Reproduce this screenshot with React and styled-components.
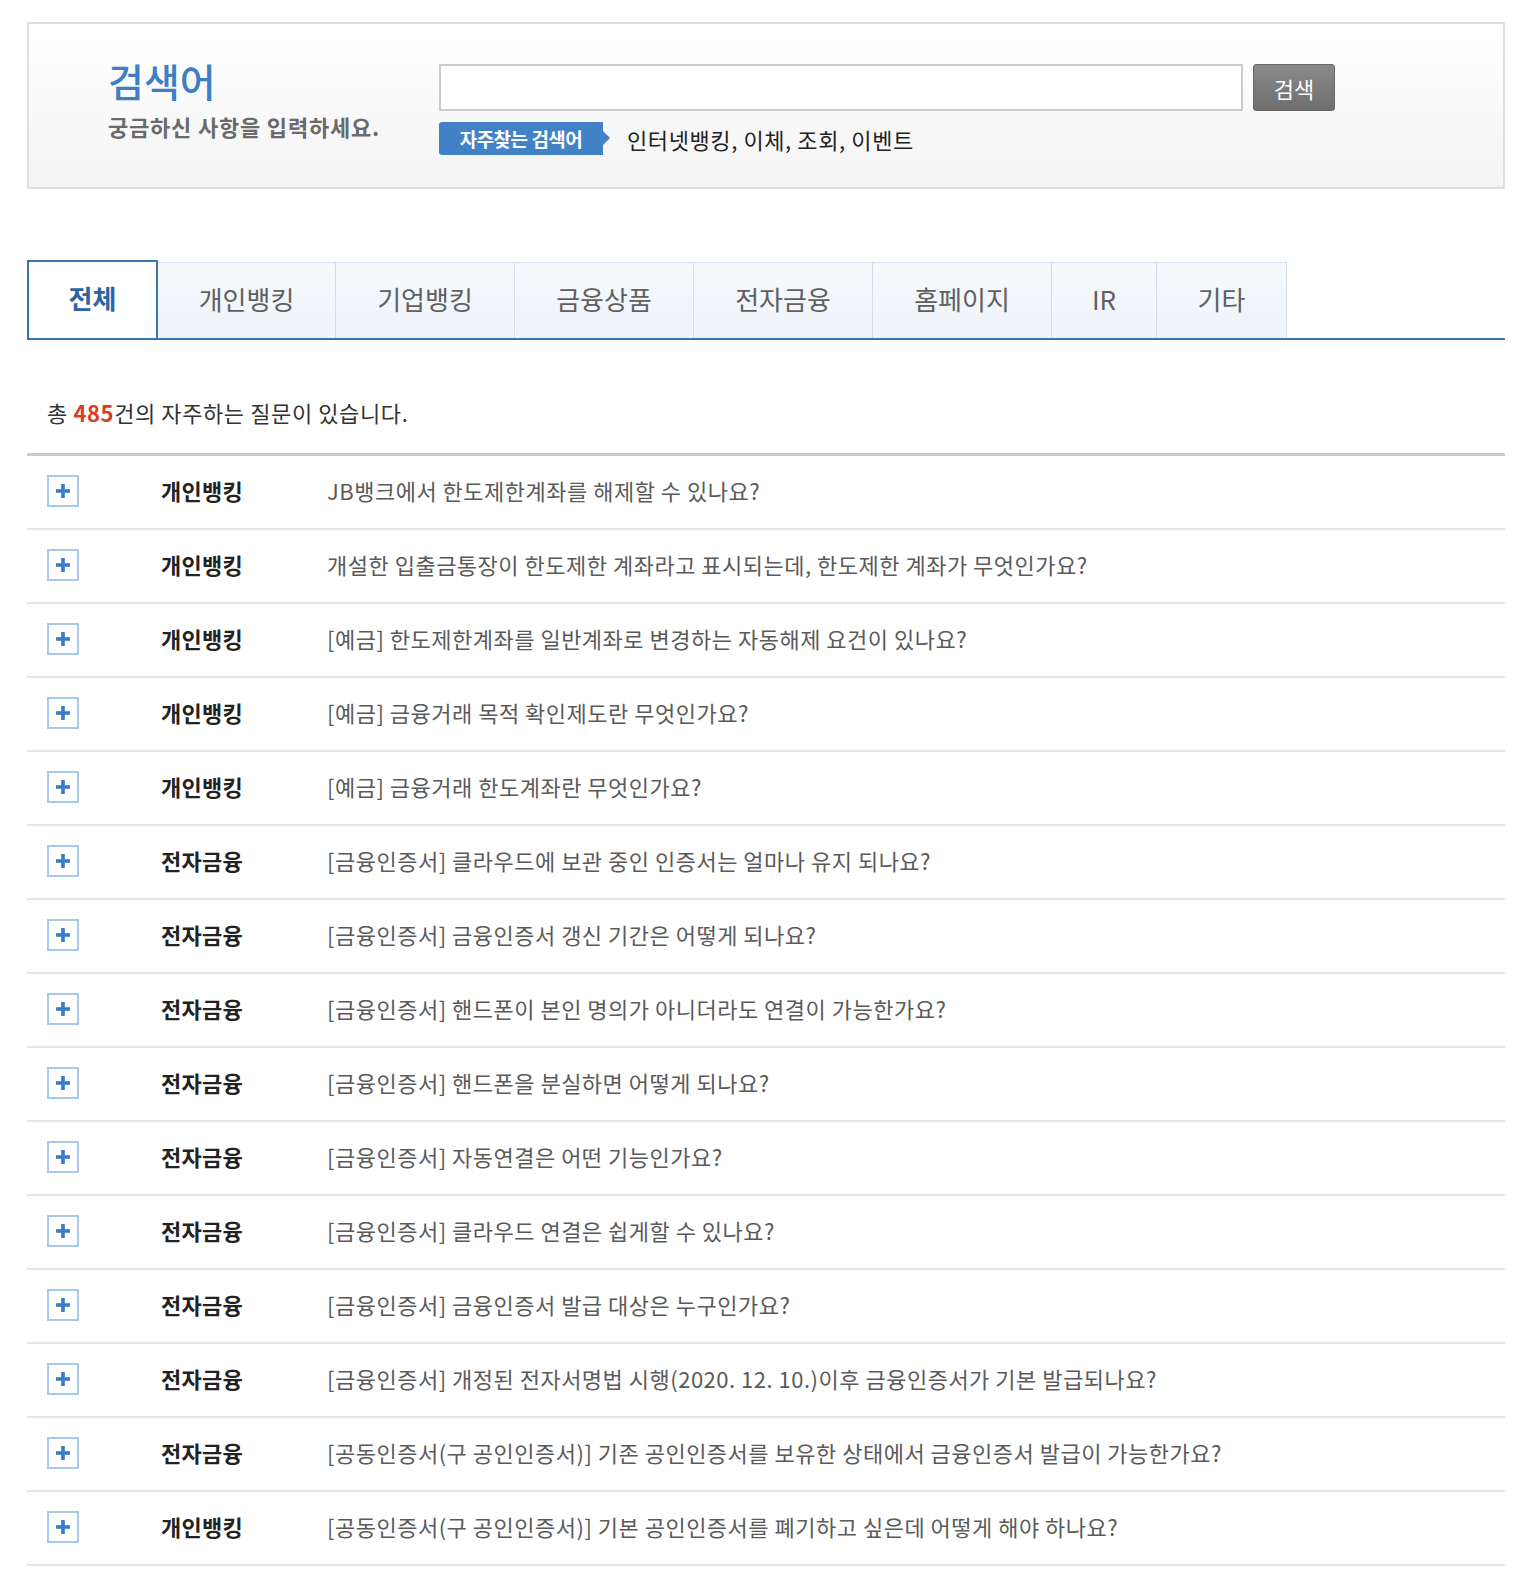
import React from 'react';
import styled, { createGlobalStyle } from 'styled-components';

const GlobalStyle = createGlobalStyle`
  body {
    margin: 0;
    background: #fff;
    font-family: "Noto Sans CJK KR", "Noto Sans", sans-serif;
  }
`;

const Page = styled.div`
  width: 1478px;
  padding: 22px 0 0 27px;
`;

const SearchBox = styled.div`
  display: flex;
  height: 163px;
  border: 2px solid #dedede;
  background: linear-gradient(to bottom, #ffffff 0%, #f4f4f4 100%);
  box-sizing: content-box;
`;

const SearchIntro = styled.div`
  width: 331px;
  padding: 31px 0 0 79px;
`;

const SearchTitle = styled.h2`
  margin: 0;
  font-size: 39px;
  font-weight: 500;
  line-height: 50px;
  color: #3b7fc6;
`;

const SearchDesc = styled.p`
  margin: 6px 0 0;
  font-size: 22px;
  font-weight: 700;
  line-height: 30px;
  color: #6a6a6a;
  letter-spacing: 0.8px;
`;

const SearchForm = styled.div`
  padding-top: 40px;
`;

const InputRow = styled.div`
  display: flex;
  gap: 10px;
`;

const SearchInput = styled.input`
  width: 804px;
  height: 47px;
  box-sizing: border-box;
  border: 2px solid #cbcbcb;
  background: #fff;
  outline: none;
`;

const SearchButton = styled.button`
  width: 82px;
  height: 47px;
  border: 1px solid #666;
  border-radius: 3px;
  background: linear-gradient(to bottom, #8a8a8a, #6e6e6e);
  color: #fff;
  font-family: inherit;
  font-size: 22px;
`;

const HotRow = styled.div`
  display: flex;
  align-items: center;
  gap: 24px;
  margin-top: 11px;
`;

const HotTag = styled.span`
  position: relative;
  display: inline-flex;
  align-items: center;
  justify-content: center;
  width: 164px;
  height: 33px;
  background: #4283c8;
  border-radius: 3px 0 0 3px;
  color: #fff;
  font-size: 19px;
  font-weight: 700;
  letter-spacing: -0.5px;

  &::after {
    content: '';
    position: absolute;
    right: -7px;
    top: 9px;
    border-left: 7px solid #4283c8;
    border-top: 7px solid transparent;
    border-bottom: 7px solid transparent;
  }
`;

const HotWords = styled.span`
  font-size: 22px;
  color: #222;
  letter-spacing: 0.6px;
`;

const Tabs = styled.ul`
  display: flex;
  margin: 71px 0 0;
  padding: 0;
  list-style: none;
  border-bottom: 2px solid #3c74b1;
`;

const Tab = styled.li`
  display: flex;
  align-items: center;
  justify-content: center;
  width: ${p => p.w}px;
  height: ${p => (p.active ? 78 : 76)}px;
  margin-bottom: ${p => (p.active ? '-2px' : '0')};
  margin-top: ${p => (p.active ? '0' : '2px')};
  padding-bottom: ${p => (p.active ? '6px' : '4px')};
  box-sizing: border-box;
  font-size: 26px;
  color: ${p => (p.active ? '#2c63a4' : '#606060')};
  font-weight: ${p => (p.active ? 700 : 400)};
  background: ${p => (p.active ? '#fff' : 'linear-gradient(to bottom, #f7f9fc, #eef3f9)')};
  border: ${p => (p.active ? '2px solid #3c74b1' : '1px solid #d3ddea')};
  border-bottom: none;
  border-left: ${p => (p.active ? '2px solid #3c74b1' : 'none')};
`;

const Count = styled.p`
  margin: 57px 0 0 20px;
  font-size: 22px;
  color: #333;
  letter-spacing: 0.6px;
  line-height: 30px;
`;

const Num = styled.strong`
  color: #d9401e;
  font-weight: 700;
`;

const List = styled.ul`
  margin: 26px 0 0;
  padding: 0;
  list-style: none;
  border-top: 3px solid #c8cacd;
`;

const Row = styled.li`
  display: flex;
  align-items: center;
  height: 74px;
  box-sizing: border-box;
  border-bottom: 2px solid #e5e5e5;
  padding: 0 0 5px 20px;
`;

const PlusBox = styled.span`
  display: flex;
  align-items: center;
  justify-content: center;
  width: 32px;
  height: 32px;
  box-sizing: border-box;
  border: 2px solid #a9c9ec;
  background: #fff;
  margin-top: 3px;
`;

const Category = styled.span`
  width: 166px;
  margin-left: 82px;
  font-size: 22px;
  font-weight: 700;
  color: #222;
  letter-spacing: 0.3px;
`;

const Question = styled.span`
  font-size: 22px;
  color: #5a5a5a;
  letter-spacing: 0.5px;
`;

const tabs = [
  { name: '전체', w: 131 },
  { name: '개인뱅킹', w: 178 },
  { name: '기업뱅킹', w: 179 },
  { name: '금융상품', w: 179 },
  { name: '전자금융', w: 179 },
  { name: '홈페이지', w: 179 },
  { name: 'IR', w: 105 },
  { name: '기타', w: 130 },
];

const faqs = [
  ['개인뱅킹', 'JB뱅크에서 한도제한계좌를 해제할 수 있나요?'],
  ['개인뱅킹', '개설한 입출금통장이 한도제한 계좌라고 표시되는데, 한도제한 계좌가 무엇인가요?'],
  ['개인뱅킹', '[예금] 한도제한계좌를 일반계좌로 변경하는 자동해제 요건이 있나요?'],
  ['개인뱅킹', '[예금] 금융거래 목적 확인제도란 무엇인가요?'],
  ['개인뱅킹', '[예금] 금융거래 한도계좌란 무엇인가요?'],
  ['전자금융', '[금융인증서] 클라우드에 보관 중인 인증서는 얼마나 유지 되나요?'],
  ['전자금융', '[금융인증서] 금융인증서 갱신 기간은 어떻게 되나요?'],
  ['전자금융', '[금융인증서] 핸드폰이 본인 명의가 아니더라도 연결이 가능한가요?'],
  ['전자금융', '[금융인증서] 핸드폰을 분실하면 어떻게 되나요?'],
  ['전자금융', '[금융인증서] 자동연결은 어떤 기능인가요?'],
  ['전자금융', '[금융인증서] 클라우드 연결은 쉽게할 수 있나요?'],
  ['전자금융', '[금융인증서] 금융인증서 발급 대상은 누구인가요?'],
  ['전자금융', '[금융인증서] 개정된 전자서명법 시행(2020. 12. 10.)이후 금융인증서가 기본 발급되나요?'],
  ['전자금융', '[공동인증서(구 공인인증서)] 기존 공인인증서를 보유한 상태에서 금융인증서 발급이 가능한가요?'],
  ['개인뱅킹', '[공동인증서(구 공인인증서)] 기본 공인인증서를 폐기하고 싶은데 어떻게 해야 하나요?'],
];

function PlusIcon() {
  return (
    <PlusBox>
      <svg width="16" height="16" viewBox="0 0 16 16">
        <rect x="6.2" y="1" width="3.6" height="14" fill="#3b7cc9" />
        <rect x="1" y="6.2" width="14" height="3.6" fill="#3b7cc9" />
      </svg>
    </PlusBox>
  );
}

export default function App() {
  return (
    <>
      <GlobalStyle />
      <Page>
        <SearchBox>
          <SearchIntro>
            <SearchTitle>검색어</SearchTitle>
            <SearchDesc>궁금하신 사항을 입력하세요.</SearchDesc>
          </SearchIntro>
          <SearchForm>
            <InputRow>
              <SearchInput type="text" />
              <SearchButton>검색</SearchButton>
            </InputRow>
            <HotRow>
              <HotTag>자주찾는 검색어</HotTag>
              <HotWords>인터넷뱅킹, 이체, 조회, 이벤트</HotWords>
            </HotRow>
          </SearchForm>
        </SearchBox>

        <Tabs>
          {tabs.map((t, i) => (
            <Tab key={t.name} w={t.w} active={i === 0}>
              {t.name}
            </Tab>
          ))}
        </Tabs>

        <Count>
          총 <Num>485</Num>건의 자주하는 질문이 있습니다.
        </Count>

        <List>
          {faqs.map(([cat, q], i) => (
            <Row key={i}>
              <PlusIcon />
              <Category>{cat}</Category>
              <Question>{q}</Question>
            </Row>
          ))}
        </List>
      </Page>
    </>
  );
}
